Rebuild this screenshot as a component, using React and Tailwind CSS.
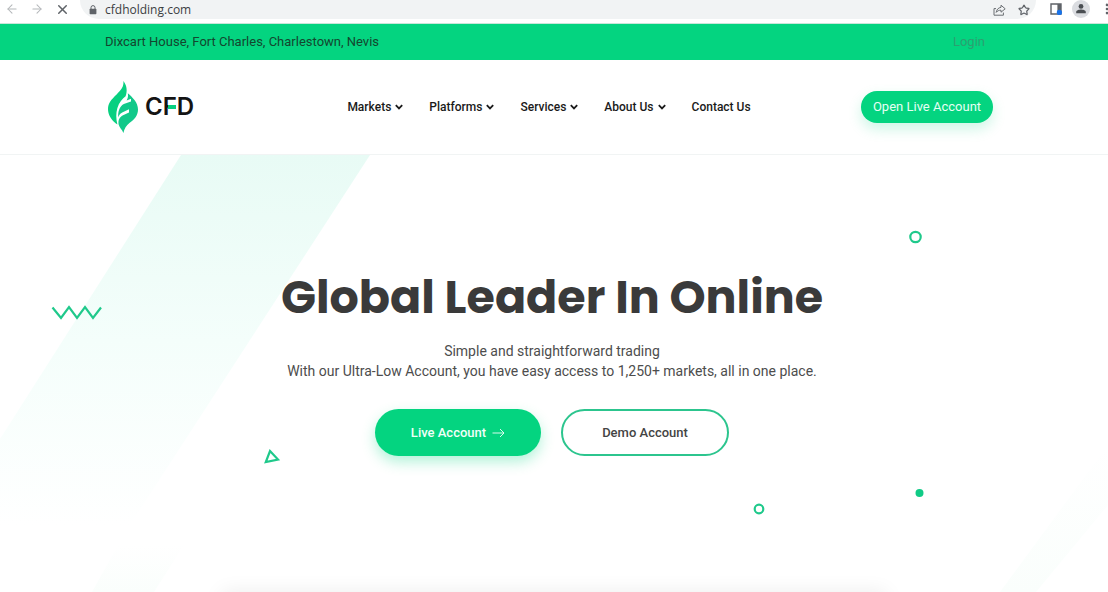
import React from 'react';
import { ArrowLeft, ArrowRight, X, Star, MoreVertical } from 'lucide-react';

const navItems = [
  { label: 'Markets', hasMenu: true },
  { label: 'Platforms', hasMenu: true },
  { label: 'Services', hasMenu: true },
  { label: 'About Us', hasMenu: true },
  { label: 'Contact Us', hasMenu: false },
];

const BrowserBar = () => {
  return (
    <div className="flex items-start h-6 bg-white border-b border-[#c9e6da] text-[#5f6368]">
      <div className="flex items-center h-[18px] w-20 pl-[5px] gap-[11px]">
        <button type="button" aria-label="Back" className="text-[#b4b7ba]">
          <ArrowLeft className="w-[14px] h-[14px]" strokeWidth={1.8} />
        </button>
        <button type="button" aria-label="Forward" className="text-[#b4b7ba]">
          <ArrowRight className="w-[14px] h-[14px]" strokeWidth={1.8} />
        </button>
        <button type="button" aria-label="Stop">
          <X className="w-[15px] h-[15px]" strokeWidth={2.4} />
        </button>
      </div>
      <div className="flex-1 flex items-center h-[19px] pl-[9px] pr-[6px] bg-[#f1f3f4] rounded-b-full">
        <svg viewBox="0 0 8 10" className="w-2 h-[10px] shrink-0" aria-hidden="true">
          <path d="M2 4V2.6a2 2 0 0 1 4 0V4" fill="none" stroke="#5f6368" strokeWidth="1" />
          <rect x="0.6" y="3.8" width="6.8" height="5.4" rx="0.7" fill="#5f6368" />
        </svg>
        <span className="ml-2 flex-1 text-xs leading-4 text-[#3c4043] font-['Open_Sans',sans-serif]">
          cfdholding.com
        </span>
        <button type="button" aria-label="Share">
          <svg viewBox="0 0 13 12" className="w-[13px] h-3" fill="none" stroke="#6b6f73" strokeWidth="1">
            <path d="M3 4.6H1v6.6h9.4V8.6" />
            <path d="M8 1.2l4.2 3.6L8 8.2V6.2C5.8 6.2 4.3 6.9 3.2 8.4 3.6 5.6 5.2 3.8 8 3.3z" strokeLinejoin="round" />
          </svg>
        </button>
        <button type="button" aria-label="Bookmark" className="ml-3">
          <Star className="w-3 h-3" strokeWidth={2.4} />
        </button>
      </div>
      <div className="flex items-center h-[18px] pl-[14px]">
        <button type="button" aria-label="Side panel">
          <svg viewBox="0 0 12 12" className="w-3 h-3">
            <path d="M1 1h10v10H1z" fill="none" stroke="#5f6368" strokeWidth="1.4" />
            <path d="M7.4 1H11v10H7.4z" fill="#5f6368" />
            <circle cx="9.4" cy="9.4" r="2.6" fill="#1a73e8" />
          </svg>
        </button>
        <button type="button" aria-label="Profile" className="ml-[10px]">
          <svg viewBox="0 0 18 18" className="w-[18px] h-[18px]">
            <circle cx="9" cy="9" r="9" fill="#dadce0" />
            <circle cx="9" cy="6.4" r="2.4" fill="#4a4e52" />
            <path d="M4.2 13.2v-1.2c0-1.6 3.2-2.4 4.8-2.4s4.8.8 4.8 2.4v1.2z" fill="#4a4e52" />
          </svg>
        </button>
        <button type="button" aria-label="Menu" className="ml-[10px] w-2 overflow-hidden">
          <MoreVertical className="w-[14px] h-[14px]" strokeWidth={2.5} />
        </button>
      </div>
    </div>
  );
};

const Logo = () => {
  return (
    <a href="#" className="flex items-center w-[132px]" aria-label="CFD">
      <svg viewBox="0 0 32 52" className="w-8 h-[52px] ml-[2px]" aria-hidden="true">
        <path
          d="M16.4 0C17 6 14 9 9.6 13.4C4.2 18.6 1 22 1 28C1 33.5 4 38.5 8.6 42.2L10.4 43.6C9 38 8.8 32 10.4 27C12 21.5 15 18 18.6 15.2C20.6 10 19.8 4.4 16.4 0Z"
          fill="#08d080"
        />
        <path
          d="M20.8 12.2C25.6 16.4 31 21.4 31 28.4C31 34.8 27 38.6 22.4 42C19.4 44.4 17.2 47.6 16.4 52C15 48.6 12.6 46.8 11.6 43.6C11 38.6 12.4 36.4 16 34.2L22 31.4V28.2L15.2 31.6C12.8 33 11.8 34.6 11.2 36.4C10.8 31 12.2 25.6 16.8 23L24 20.4V17.8L19.6 19.4C21 17.2 21.4 15 20.8 12.2Z"
          fill="#12c98a"
        />
      </svg>
      <span className="relative ml-[6px] font-['Inter',sans-serif] font-semibold text-2xl leading-8 text-[#141414]">
        CFD
        <span className="absolute left-[23px] top-[14px] w-2 h-1 bg-[#08d080]" />
      </span>
    </a>
  );
};

const MenuChevron = () => (
  <svg viewBox="0 0 8 6" className="w-2 h-[6px]" fill="none" stroke="#1a1a1a" strokeWidth="1.8" aria-hidden="true">
    <path d="M0.8 1.2L4 4.4L7.2 1.2" />
  </svg>
);

const Header = () => {
  return (
    <header>
      <div className="flex items-center justify-between h-9 pl-[105px] pr-[123px] bg-[#04d480] text-[13px]">
        <span className="text-[#14462f]">Dixcart House, Fort Charles, Charlestown, Nevis</span>
        <a href="#" className="text-[#2ba071]">Login</a>
      </div>
      <div className="flex items-center justify-between h-[95px] pl-[105px] pr-[115px] border-b border-[#f1f4f4]">
        <Logo />
        <nav className="flex items-center gap-[26px] text-xs font-medium text-[#1a1a1a]">
          {navItems.map((item) => (
            <a key={item.label} href="#" className="flex items-center gap-1">
              {item.label}
              {item.hasMenu && <MenuChevron />}
            </a>
          ))}
        </nav>
        <button
          type="button"
          className="w-[132px] h-8 rounded-full bg-[#04d480] text-[#e6fff4] text-[13px] shadow-[0_6px_14px_rgba(4,212,128,0.2)]"
        >
          Open Live Account
        </button>
      </div>
    </header>
  );
};

const HeroBackground = () => {
  return (
    <svg
      viewBox="0 0 1108 437"
      preserveAspectRatio="xMidYMin slice"
      className="absolute inset-0 w-full h-full"
      aria-hidden="true"
    >
      <defs>
        <linearGradient id="band" x1="0" y1="0" x2="0" y2="1">
          <stop offset="0" stopColor="#e8fbf5" />
          <stop offset="0.5" stopColor="#f4fefb" />
          <stop offset="1" stopColor="#ffffff" />
        </linearGradient>
        <linearGradient id="bandSoft" x1="0" y1="0" x2="0" y2="1">
          <stop offset="0" stopColor="#ffffff" />
          <stop offset="1" stopColor="#fafefc" />
        </linearGradient>
      </defs>
      <path d="M181 0H370L130 370H0V284Z" fill="url(#band)" />
      <path d="M118 390H184L154 437H92Z" fill="url(#bandSoft)" />
      <path d="M1108 290V350L1036 437H1000Z" fill="url(#bandSoft)" />

      <g fill="none" stroke="#1fc98b" strokeWidth="2.2">
        <path d="M52.5 152.5L61 163L69 152L77 163L85 152L93 163L101 152.5" />
        <path d="M270 296L278 304.5L265.8 307Z" />
        <circle cx="915.5" cy="82" r="5.2" />
        <circle cx="759" cy="354" r="4.3" />
      </g>
      <circle cx="919.500" cy="338" r="4" fill="#10cb86" />
    </svg>
  );
};

const Hero = () => {
  return (
    <main className="relative flex-1 overflow-hidden">
      <HeroBackground />
      <div className="relative flex flex-col items-center pt-[110px] pr-1 text-center">
        <h1 className="font-['Poppins','Inter',sans-serif] font-bold text-[46px] leading-[64px] text-[#3a3a3a]">
          Global Leader In Online
        </h1>
        <p className="mt-3 text-sm leading-5 text-[#4d4d4d]">
          Simple and straightforward trading
          <br />
          With our Ultra-Low Account, you have easy access to 1,250+ markets, all in one place.
        </p>
        <div className="flex gap-5 mt-7 text-[13px] font-medium">
          <button
            type="button"
            className="flex items-center justify-center gap-[6px] w-[166px] h-[47px] rounded-full bg-[#04d480] text-[#f0fff8] shadow-[0_6px_14px_rgba(4,212,128,0.3)]"
          >
            Live Account
            <svg viewBox="0 0 13 10" className="w-[13px] h-[10px]" fill="none" stroke="currentColor" strokeWidth="0.9">
              <path d="M0.5 5H12M8 1L12 5L8 9" />
            </svg>
          </button>
          <button
            type="button"
            className="w-[168px] h-[47px] rounded-full border-2 border-[#2cc58e] bg-white text-[#444444]"
          >
            Demo Account
          </button>
        </div>
      </div>
      <div className="absolute inset-x-[20%] top-full h-5 shadow-[0_0_20px_rgba(0,0,0,0.08)]" />
    </main>
  );
};

const App = () => {
  return (
    <div className="min-h-screen flex flex-col bg-white font-['Roboto',sans-serif]">
      <BrowserBar />
      <Header />
      <Hero />
    </div>
  );
};

export default App;
